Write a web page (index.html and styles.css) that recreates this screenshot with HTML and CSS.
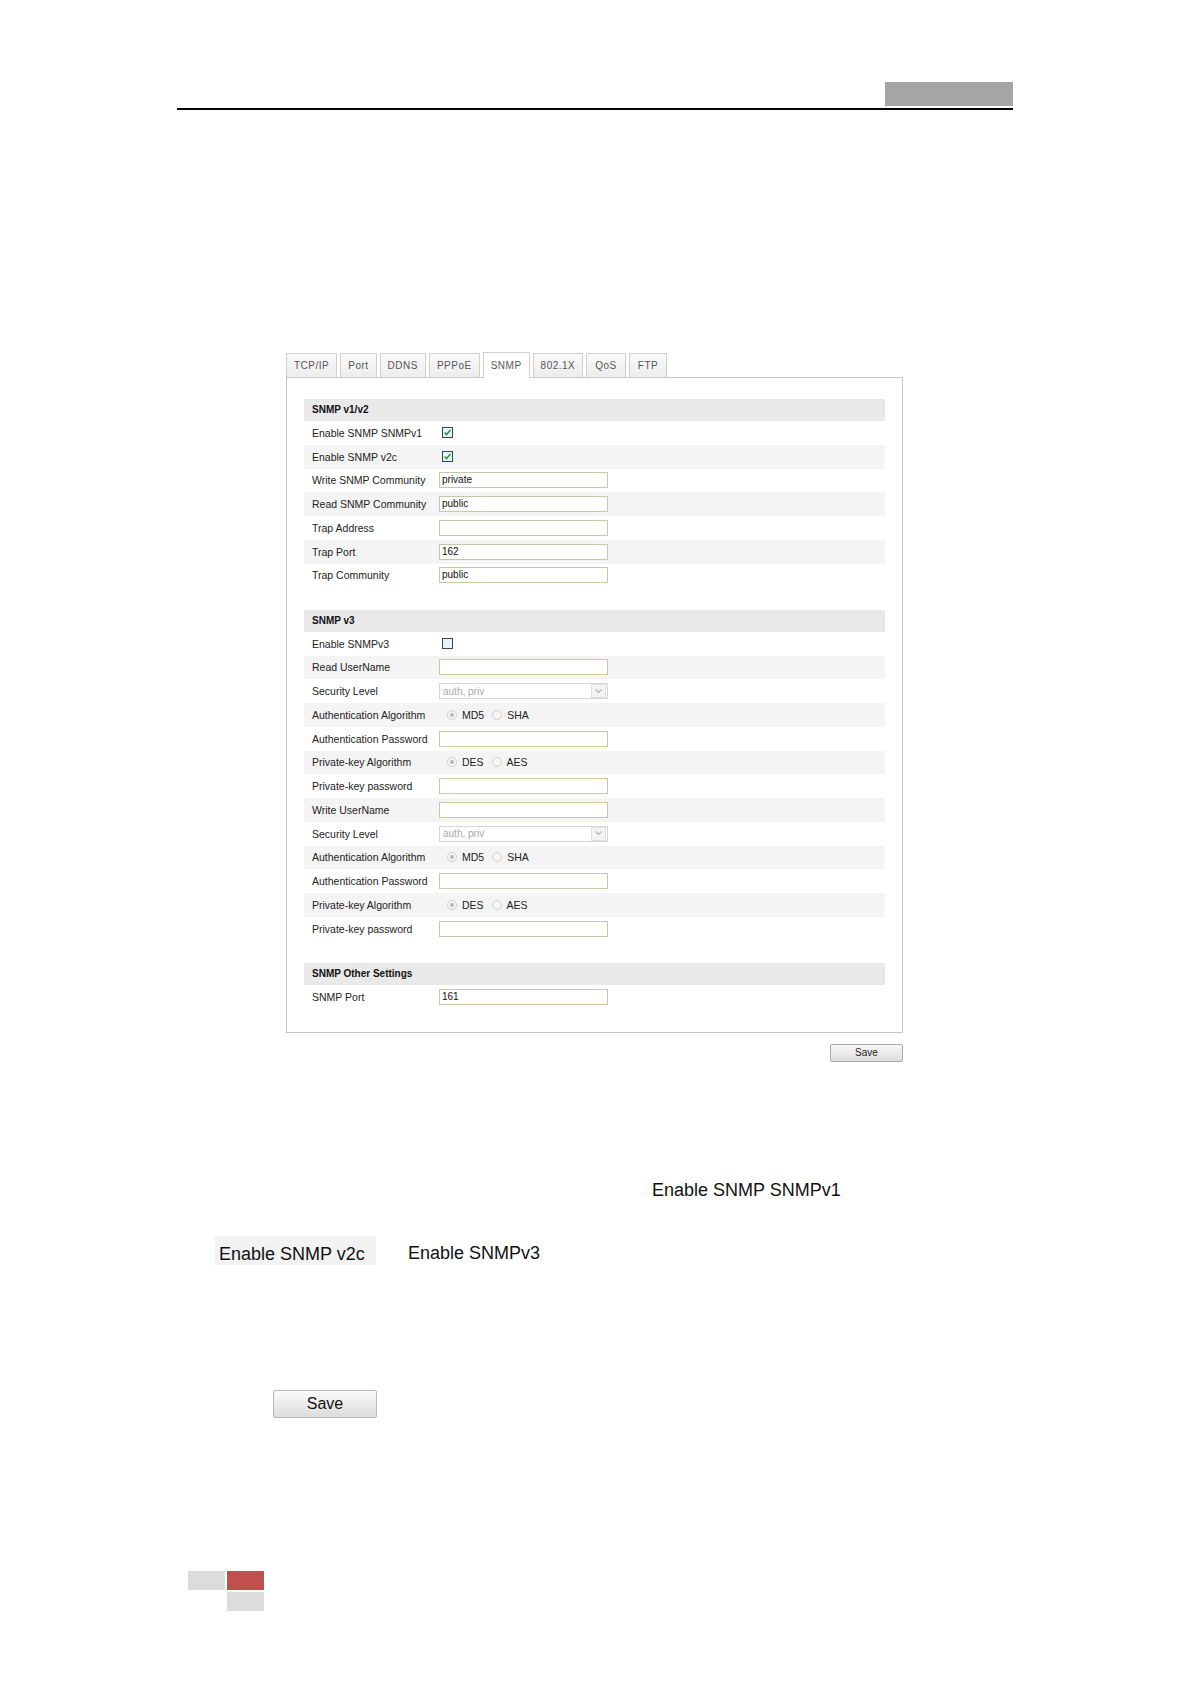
FILE: index.html
```html
<!DOCTYPE html>
<html lang="en">
<head>
<meta charset="UTF-8">
<title>SNMP Settings</title>
<link rel="stylesheet" href="styles.css">
</head>
<body>
<div class="page">
    <header class="running-head">
        <div class="head-tab"></div>
        <div class="head-rule"></div>
    </header>

    <div class="shot">
        <div class="tabs">
            <span class="tab">TCP/IP</span>
            <span class="tab">Port</span>
            <span class="tab">DDNS</span>
            <span class="tab">PPPoE</span>
            <span class="tab active">SNMP</span>
            <span class="tab">802.1X</span>
            <span class="tab wide">QoS</span>
            <span class="tab wide">FTP</span>
        </div>
        <div class="panel">
            <div class="section">
                <div class="sec-title">SNMP v1/v2</div>
                <div class="row"><span class="label">Enable SNMP SNMPv1</span><span class="check on"><svg width="11" height="11" viewBox="0 0 11 11"><rect x="0.5" y="0.5" width="10" height="10" fill="#eef2f6" stroke="#2b4a6b"/><path d="M2.5 5.5 L4.5 7.5 L8.5 3" fill="none" stroke="#2f9a2f" stroke-width="1.6"/></svg></span></div>
                <div class="row"><span class="label">Enable SNMP v2c</span><span class="check on"><svg width="11" height="11" viewBox="0 0 11 11"><rect x="0.5" y="0.5" width="10" height="10" fill="#eef2f6" stroke="#2b4a6b"/><path d="M2.5 5.5 L4.5 7.5 L8.5 3" fill="none" stroke="#2f9a2f" stroke-width="1.6"/></svg></span></div>
                <div class="row"><span class="label">Write SNMP Community</span><span class="input">private</span></div>
                <div class="row"><span class="label">Read SNMP Community</span><span class="input">public</span></div>
                <div class="row"><span class="label">Trap Address</span><span class="input"></span></div>
                <div class="row"><span class="label">Trap Port</span><span class="input">162</span></div>
                <div class="row"><span class="label">Trap Community</span><span class="input">public</span></div>
            </div>

            <div class="section">
                <div class="sec-title">SNMP v3</div>
                <div class="row"><span class="label">Enable SNMPv3</span><span class="check"><svg width="11" height="11" viewBox="0 0 11 11"><rect x="0.5" y="0.5" width="10" height="10" fill="#eef2f6" stroke="#2b4a6b"/></svg></span></div>
                <div class="row"><span class="label">Read UserName</span><span class="input"></span></div>
                <div class="row"><span class="label">Security Level</span><span class="select"><span class="sel-text">auth, priv</span><span class="sel-arrow"><svg width="7" height="5" viewBox="0 0 7 5"><path d="M0.5 0.5 L3.5 3.5 L6.5 0.5" fill="none" stroke="#b5b5b5" stroke-width="1.2"/></svg></span></span></div>
                <div class="row"><span class="label">Authentication Algorithm</span><span class="radios"><span class="radio on"></span>MD5<span class="radio"></span>SHA</span></div>
                <div class="row"><span class="label">Authentication Password</span><span class="input"></span></div>
                <div class="row"><span class="label">Private-key Algorithm</span><span class="radios"><span class="radio on"></span>DES<span class="radio"></span>AES</span></div>
                <div class="row"><span class="label">Private-key password</span><span class="input"></span></div>
                <div class="row"><span class="label">Write UserName</span><span class="input"></span></div>
                <div class="row"><span class="label">Security Level</span><span class="select"><span class="sel-text">auth, priv</span><span class="sel-arrow"><svg width="7" height="5" viewBox="0 0 7 5"><path d="M0.5 0.5 L3.5 3.5 L6.5 0.5" fill="none" stroke="#b5b5b5" stroke-width="1.2"/></svg></span></span></div>
                <div class="row"><span class="label">Authentication Algorithm</span><span class="radios"><span class="radio on"></span>MD5<span class="radio"></span>SHA</span></div>
                <div class="row"><span class="label">Authentication Password</span><span class="input"></span></div>
                <div class="row"><span class="label">Private-key Algorithm</span><span class="radios"><span class="radio on"></span>DES<span class="radio"></span>AES</span></div>
                <div class="row"><span class="label">Private-key password</span><span class="input"></span></div>
            </div>

            <div class="section last">
                <div class="sec-title">SNMP Other Settings</div>
                <div class="row"><span class="label">SNMP Port</span><span class="input">161</span></div>
            </div>
        </div>
        <div class="shot-actions"><span class="btn-small">Save</span></div>
    </div>

    <div class="body-text">
        <p class="line1"><span class="snip">Enable SNMP SNMPv1</span></p>
        <p class="line2"><span class="snip boxed">Enable SNMP v2c</span><span class="snip">Enable SNMPv3</span></p>
        <p class="line3"><span class="btn-big">Save</span></p>
    </div>

    <footer class="foot">
        <span class="blk grey"></span>
        <span class="blk red"></span>
        <span class="blk"></span>
        <span class="blk grey"></span>
    </footer>
</div>
</body>
</html>
```

FILE: styles.css
```css
body {
    margin: 0;
    background-color: #fff;
    font-family: "Liberation Sans", Arial, sans-serif;
    color: #222;
}
.page {
    width: 1191px;
    padding-top: 82px;
}

/* running head */
.running-head {
    margin-left: 177px;
    width: 836px;
    display: flex;
    flex-direction: column;
    align-items: flex-end;
}
.head-tab {
    width: 128px;
    height: 24px;
    background-color: #a6a6a6;
}
.head-rule {
    width: 100%;
    height: 2px;
    margin-top: 2px;
    background-color: #000;
}

/* screenshot of the web ui */
.shot {
    margin-left: 286px;
    margin-top: 242px;
    width: 617px;
}
.tabs {
    display: flex;
    align-items: flex-end;
    gap: 3px;
    height: 25px;
}
.tab {
    box-sizing: border-box;
    height: 24px;
    padding: 0 7px;
    border: 1px solid #cfcfcf;
    border-bottom: none;
    background: linear-gradient(#fafafa, #ececec);
    font-size: 10px;
    letter-spacing: 0.5px;
    line-height: 23px;
    color: #555;
}
.tab.wide {
    padding: 0 8px;
}
.tab.active {
    height: 26px;
    margin-bottom: -1px;
    background: #fff;
    line-height: 25px;
    position: relative;
}
.panel {
    border: 1px solid #c6c6c6;
    padding: 21px 17px 23px;
}
.section {
    margin-bottom: 22.5px;
}
.section.last {
    margin-bottom: 0;
}
.sec-title {
    height: 22px;
    line-height: 22px;
    padding-left: 8px;
    background-color: #e9e9e9;
    font-size: 10px;
    font-weight: bold;
    color: #111;
}
.row {
    display: flex;
    align-items: center;
    height: 23.75px;
}
.row:nth-child(odd) {
    background-color: #f4f4f4;
}
.label {
    box-sizing: border-box;
    width: 135px;
    padding-left: 8px;
    font-size: 10.5px;
    color: #222;
}
.check {
    display: flex;
    margin-left: 3px;
}
.input {
    box-sizing: border-box;
    width: 169px;
    height: 16px;
    padding: 0 2px;
    border: 1px solid #c8c8a4;
    background: #fff;
    font-size: 10px;
    line-height: 14px;
    color: #111;
}
.select {
    box-sizing: border-box;
    display: flex;
    align-items: center;
    justify-content: space-between;
    width: 169px;
    height: 16px;
    border: 1px solid #d6d6d6;
    background: #fff;
}
.sel-text {
    padding-left: 3px;
    font-size: 10px;
    color: #aaa;
}
.sel-arrow {
    display: flex;
    align-items: center;
    justify-content: center;
    width: 13px;
    height: 12px;
    margin-right: 1px;
    border: 1px solid #e0e0e0;
    background: #f3f3f3;
}
.radios {
    display: flex;
    align-items: center;
    font-size: 10.5px;
    color: #222;
}
.radio {
    box-sizing: border-box;
    width: 10px;
    height: 10px;
    margin: 0 5px 0 8px;
    border: 1px solid #d0d0d0;
    border-radius: 50%;
    background: #f6f6f6;
    display: flex;
    align-items: center;
    justify-content: center;
}
.radio.on::after {
    content: "";
    width: 4px;
    height: 4px;
    border-radius: 50%;
    background: #b8b8b8;
}
.shot-actions {
    display: flex;
    justify-content: flex-end;
    margin-top: 11px;
}
.btn-small {
    box-sizing: border-box;
    width: 73px;
    height: 18px;
    border: 1px solid #ababab;
    border-radius: 2px;
    background: linear-gradient(#f7f7f7, #dedede);
    font-size: 10px;
    line-height: 16px;
    text-align: center;
    color: #222;
}

/* text under the figure */
.body-text p {
    margin: 0;
    display: flex;
    align-items: center;
}
.snip {
    font-size: 18px;
    color: #111;
}
.line1 {
    margin-top: 118px !important;
    padding-left: 652px;
    height: 22px;
}
.line2 {
    margin-top: 34px !important;
    padding-left: 215px;
    height: 29px;
}
.line2 .snip {
    padding-top: 6px;
}
.snip.boxed {
    box-sizing: border-box;
    width: 161px;
    height: 29px;
    padding: 8px 0 0 4px;
    background-color: #f2f2f2;
    margin-right: 32px;
}
.line3 {
    margin-top: 125px !important;
    padding-left: 273px;
}
.btn-big {
    box-sizing: border-box;
    width: 104px;
    height: 28px;
    border: 1px solid #b9b9b9;
    border-radius: 2px;
    background: linear-gradient(#fbfbfb, #dcdcdc);
    font-size: 16px;
    line-height: 26px;
    text-align: center;
    color: #111;
}

/* page footer marks */
.foot {
    margin-top: 153px;
    margin-left: 188px;
    display: grid;
    grid-template-columns: 37px 37px;
    grid-template-rows: 19px 19px;
    gap: 2px;
}
.blk.grey {
    background-color: #dcdcdc;
}
.blk.red {
    background-color: #c0504d;
}
```
